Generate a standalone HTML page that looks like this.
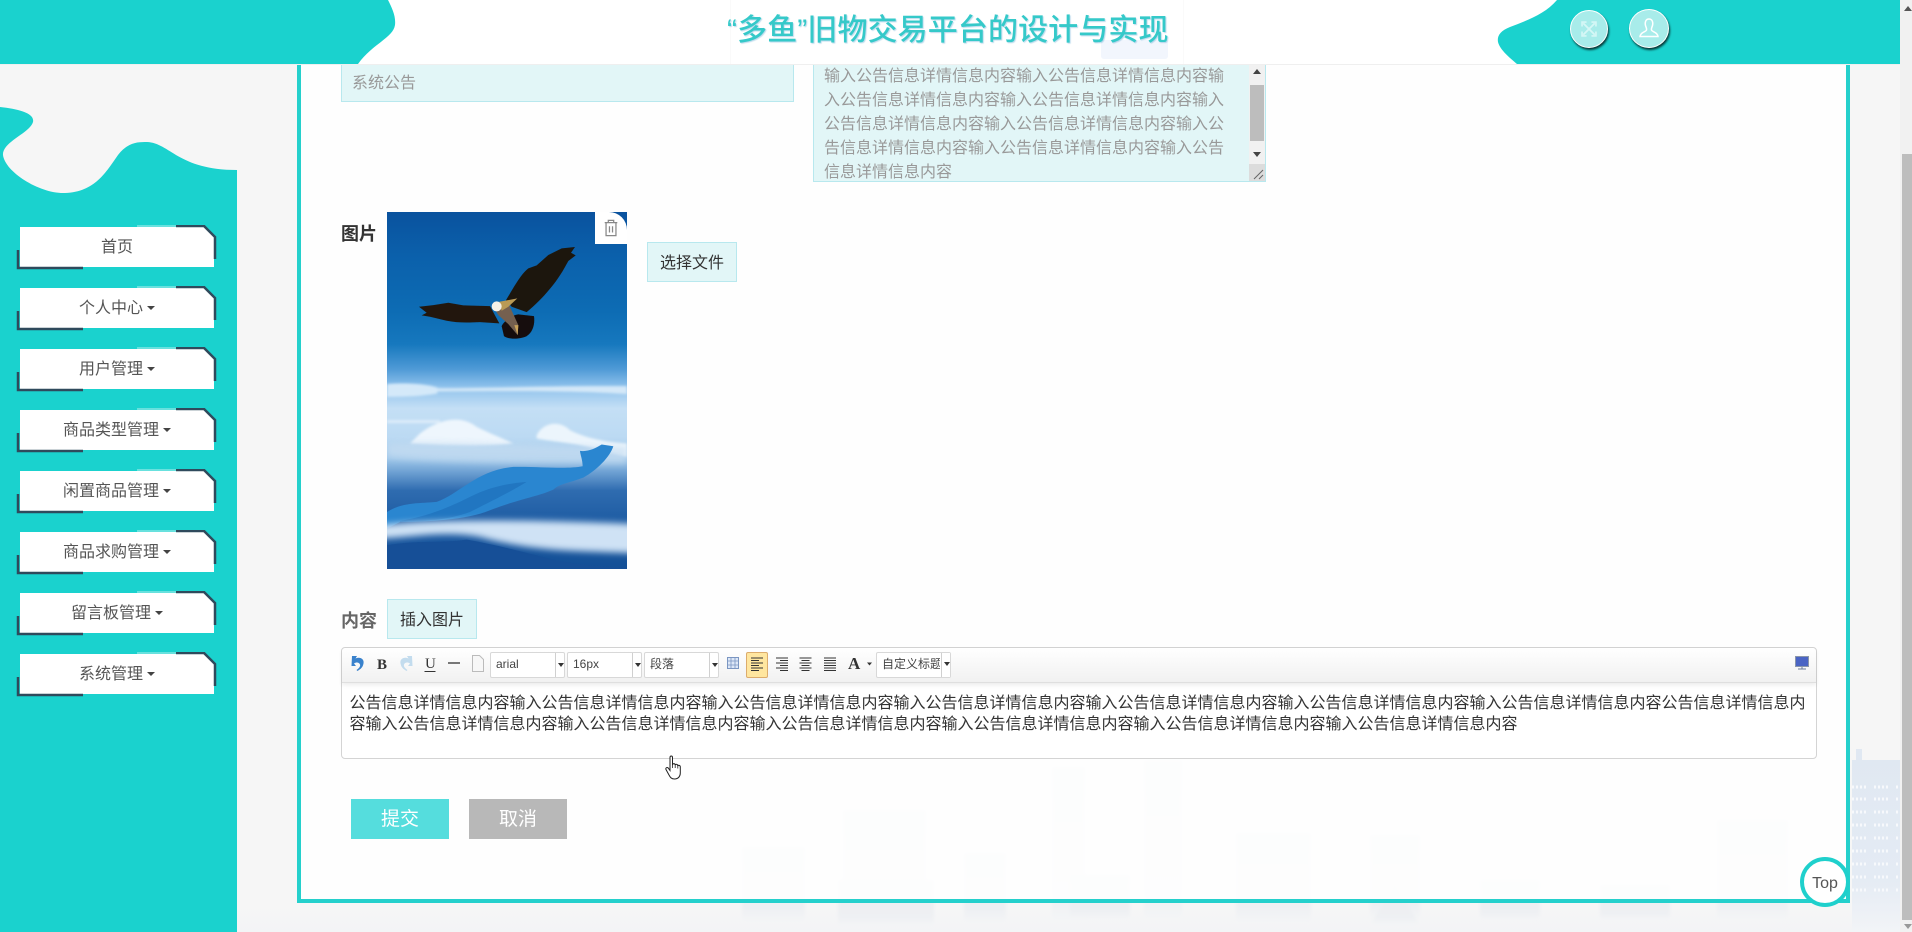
<!DOCTYPE html>
<html lang="zh-CN"><head><meta charset="utf-8"><title>多鱼</title>
<style>
*{box-sizing:border-box}
html,body{margin:0;padding:0;width:1912px;height:932px;overflow:hidden;background:#f6f6f6;font-family:"Liberation Sans","Noto Sans CJK SC",sans-serif;color:#333}
.a{position:absolute}
.nav{position:absolute;left:0;width:220px;height:46px}
.nav .b{position:absolute;left:20px;top:2px;width:194px;height:40px;background:#fff;clip-path:polygon(0 0,184px 0,194px 10px,194px 100%,0 100%);text-align:center;line-height:42px;font-size:16px;color:#555}
.nav svg{position:absolute;left:0;top:0}
.caret{display:inline-block;width:0;height:0;border-left:4px solid transparent;border-right:4px solid transparent;border-top:4px solid #444;margin-left:4px;vertical-align:middle;position:relative;top:-1px}
.inp{background:#e2f6f7;border:1px solid #b8e8ee}
.btn{position:absolute;width:90px;height:40px;background:#e2f6f7;border:1px solid #b8e8ee;font-size:16px;text-align:center;color:#333}
.sel{position:absolute;top:652px;height:26px;background:#fff;border:1px solid #d8d8d8;border-radius:2px;font-size:12px;line-height:23px;color:#444;padding-left:5px;overflow:hidden;white-space:nowrap}
.sel i{position:absolute;top:0;height:24px;width:1px;background:#d0d0d0}
.sel b{position:absolute;top:10px;width:0;height:0;border-left:3px solid transparent;border-right:3px solid transparent;border-top:4px solid #333}
</style></head><body>

<svg class="a" style="left:0;top:0" width="1912" height="932" viewBox="0 0 1912 932">
<defs>
<linearGradient id="bot" x1="0" y1="0" x2="0" y2="1"><stop offset="0" stop-color="#f6f6f6"/><stop offset="1" stop-color="#f3f4f6"/></linearGradient>
<linearGradient id="fade" x1="0" y1="0" x2="0" y2="1"><stop offset="0" stop-color="#ebedf0"/><stop offset=".8" stop-color="#eef0f3"/><stop offset="1" stop-color="#f4f5f6"/></linearGradient>
<linearGradient id="rb" x1="0" y1="0" x2="0" y2="1"><stop offset="0" stop-color="#e0e8f2"/><stop offset=".7" stop-color="#e4ebf4"/><stop offset="1" stop-color="#f2f4f7"/></linearGradient>
<filter id="sb"><feGaussianBlur stdDeviation="1.500"/></filter>
</defs>
<rect x="0" y="904" width="1912" height="28" fill="url(#bot)"/>
<g fill="url(#fade)" filter="url(#sb)">
<rect x="742" y="847" width="63" height="75"/><rect x="843" y="810" width="83" height="115"/><rect x="838" y="880" width="96" height="46"/>
<rect x="964" y="853" width="42" height="70"/><rect x="1052" y="767" width="33" height="155"/><rect x="1070" y="875" width="60" height="45"/><rect x="1144" y="760" width="38" height="160"/>
<rect x="1236" y="833" width="75" height="90"/><rect x="1370" y="835" width="50" height="85"/><path d="M1370 925l25-40 25 40z"/><rect x="1480" y="880" width="60" height="40"/>
<rect x="1600" y="885" width="70" height="35"/><rect x="1717" y="820" width="71" height="100"/>
</g>
<path fill="url(#rb)" d="M1852 760h4v-11h6v11h38v172h-48z"/>
<g stroke="#f7f9fc" stroke-width="3" stroke-dasharray="2 2 2 2 2 2 2 8" fill="none"><path d="M1852 787h48M1852 799h48M1852 812h48M1852 825h48M1852 838h48M1852 851h48M1852 864h48M1852 877h48M1852 890h48"/></g>
</svg>

<div class="a" style="left:297px;top:0;width:1553px;height:903px;border:4px solid #25d0cc;border-top:0;background:rgba(255,255,255,.85)"></div>

<!-- sidebar -->
<svg class="a" style="left:0;top:60px" width="240" height="872" viewBox="0 60 240 872"><path fill="#1ad2ce" d="M0 107C18 109 35 113 33 122C30 133 2 142 3 155C5 172 40 194 65 193C95 192 106 172 118 155C128 142 138 142 147 142C170 143 178 170 237 170V932H0Z"/></svg>
<div class="nav" style="top:225px"><div class="b">首页</div><svg width="220" height="46"><path d="M137 1H176" stroke="#b6f0ee" stroke-width="1"/><path d="M176 1H204L215 12V34" fill="none" stroke="#2f4a5c" stroke-width="2.5"/><path d="M18 25V43H83" fill="none" stroke="#2f4a5c" stroke-width="2.5"/></svg></div>
<div class="nav" style="top:286px"><div class="b">个人中心<span class="caret"></span></div><svg width="220" height="46"><path d="M137 1H176" stroke="#b6f0ee" stroke-width="1"/><path d="M176 1H204L215 12V34" fill="none" stroke="#2f4a5c" stroke-width="2.5"/><path d="M18 25V43H83" fill="none" stroke="#2f4a5c" stroke-width="2.5"/></svg></div>
<div class="nav" style="top:347px"><div class="b">用户管理<span class="caret"></span></div><svg width="220" height="46"><path d="M137 1H176" stroke="#b6f0ee" stroke-width="1"/><path d="M176 1H204L215 12V34" fill="none" stroke="#2f4a5c" stroke-width="2.5"/><path d="M18 25V43H83" fill="none" stroke="#2f4a5c" stroke-width="2.5"/></svg></div>
<div class="nav" style="top:408px"><div class="b">商品类型管理<span class="caret"></span></div><svg width="220" height="46"><path d="M137 1H176" stroke="#b6f0ee" stroke-width="1"/><path d="M176 1H204L215 12V34" fill="none" stroke="#2f4a5c" stroke-width="2.5"/><path d="M18 25V43H83" fill="none" stroke="#2f4a5c" stroke-width="2.5"/></svg></div>
<div class="nav" style="top:469px"><div class="b">闲置商品管理<span class="caret"></span></div><svg width="220" height="46"><path d="M137 1H176" stroke="#b6f0ee" stroke-width="1"/><path d="M176 1H204L215 12V34" fill="none" stroke="#2f4a5c" stroke-width="2.5"/><path d="M18 25V43H83" fill="none" stroke="#2f4a5c" stroke-width="2.5"/></svg></div>
<div class="nav" style="top:530px"><div class="b">商品求购管理<span class="caret"></span></div><svg width="220" height="46"><path d="M137 1H176" stroke="#b6f0ee" stroke-width="1"/><path d="M176 1H204L215 12V34" fill="none" stroke="#2f4a5c" stroke-width="2.5"/><path d="M18 25V43H83" fill="none" stroke="#2f4a5c" stroke-width="2.5"/></svg></div>
<div class="nav" style="top:591px"><div class="b">留言板管理<span class="caret"></span></div><svg width="220" height="46"><path d="M137 1H176" stroke="#b6f0ee" stroke-width="1"/><path d="M176 1H204L215 12V34" fill="none" stroke="#2f4a5c" stroke-width="2.5"/><path d="M18 25V43H83" fill="none" stroke="#2f4a5c" stroke-width="2.5"/></svg></div>
<div class="nav" style="top:652px"><div class="b">系统管理<span class="caret"></span></div><svg width="220" height="46"><path d="M137 1H176" stroke="#b6f0ee" stroke-width="1"/><path d="M176 1H204L215 12V34" fill="none" stroke="#2f4a5c" stroke-width="2.5"/><path d="M18 25V43H83" fill="none" stroke="#2f4a5c" stroke-width="2.5"/></svg></div>

<!-- form top -->
<div class="a inp" style="left:341px;top:40px;width:453px;height:62px"></div>
<div class="a" style="left:352px;top:72px;font-size:16px;line-height:24px;color:#999">系统公告</div>
<div class="a inp" style="left:813px;top:40px;width:453px;height:142px;overflow:hidden"></div>
<div class="a" style="left:824px;top:65px;font-size:16px;line-height:23.9px;color:#999;white-space:nowrap;height:116px;overflow:hidden">输入公告信息详情信息内容输入公告信息详情信息内容输<br>入公告信息详情信息内容输入公告信息详情信息内容输入<br>公告信息详情信息内容输入公告信息详情信息内容输入公<br>告信息详情信息内容输入公告信息详情信息内容输入公告<br>信息详情信息内容</div>
<div class="a" style="left:1249px;top:64px;width:16px;height:117px;background:#f1f1f1"></div>
<div class="a" style="left:1250px;top:85px;width:14px;height:56px;background:#bdbdbd"></div>
<div class="a" style="left:1253px;top:69px;width:0;height:0;border-left:4px solid transparent;border-right:4px solid transparent;border-bottom:5px solid #444"></div>
<div class="a" style="left:1253px;top:152px;width:0;height:0;border-left:4px solid transparent;border-right:4px solid transparent;border-top:5px solid #444"></div>
<svg class="a" style="left:1249px;top:164px" width="16" height="17"><rect width="16" height="17" fill="#dcdcdc"/><path d="M5 15L14 6M10 15L14 11" stroke="#666" stroke-width="1"/></svg>

<!-- picture -->
<div class="a" style="left:341px;top:221px;font-size:18px;line-height:26px;font-weight:bold;color:#333">图片</div>
<svg class="a" style="left:387px;top:212px" width="240" height="357" viewBox="21 36 720 1070" preserveAspectRatio="none">
<defs>
<linearGradient id="sky" x1="0" y1="0" x2="0" y2="1"><stop offset="0" stop-color="#0a529e"/><stop offset=".12" stop-color="#0b60ab"/><stop offset=".28" stop-color="#0d6cb4"/><stop offset=".37" stop-color="#1678be"/><stop offset=".44" stop-color="#4f9ad6"/><stop offset=".49" stop-color="#8fc2ec"/><stop offset=".55" stop-color="#c4dff5"/><stop offset=".63" stop-color="#bcdaf3"/><stop offset=".69" stop-color="#9fc7e9"/><stop offset=".73" stop-color="#6c9fd2"/><stop offset=".78" stop-color="#2f6cb0"/><stop offset=".86" stop-color="#1f5da4"/><stop offset="1" stop-color="#134f96"/></linearGradient>
<filter id="bl" x="-10%" y="-30%" width="120%" height="160%"><feGaussianBlur stdDeviation="10"/></filter><filter id="bl2" x="-10%" y="-30%" width="120%" height="160%"><feGaussianBlur stdDeviation="4"/></filter><filter id="bl1"><feGaussianBlur stdDeviation="1"/></filter>
</defs>
<rect x="21" y="36" width="720" height="1070" fill="url(#sky)"/>
<g filter="url(#bl2)"><path fill="#d4e9f9" d="M21 552C70 548 130 550 172 562V580C120 590 60 590 21 590Z"/><path fill="#d4e8f8" d="M170 564C300 566 500 556 741 558V582C600 572 400 572 170 574Z"/></g>
<g filter="url(#bl2)"><path fill="#eef6fd" d="M120 700C170 660 240 640 290 680C330 700 370 715 400 730C300 740 180 735 90 730Z"/><path fill="#ecf5fc" d="M470 705C490 665 540 660 570 690C620 715 680 725 741 730V770L660 750C600 730 520 725 470 715Z"/><path fill="#e0eefa" d="M21 660H180V668H21Z"/></g>
<path fill="#c8def2" filter="url(#bl)" opacity=".7" d="M21 730C200 720 500 740 741 740V790C500 790 200 790 21 770Z"/>
<path fill="#2b86d0" filter="url(#bl1)" d="M21 935C70 905 120 910 170 905C240 880 290 810 400 800C470 798 560 808 608 798C608 780 600 760 600 752C625 755 645 745 665 733L700 738C690 770 650 810 610 832C560 850 540 850 520 868C470 890 420 895 330 930C260 960 130 965 60 965L21 985Z"/>
<path fill="#1b6db8" d="M60 962C130 950 190 930 270 890C330 860 380 850 440 845C400 870 340 900 270 935C200 960 120 965 60 965Z" opacity=".6" filter="url(#bl1)"/>
<path fill="#cfe2f5" filter="url(#bl)" d="M0 975C150 958 400 955 780 972V1060C640 1050 480 1060 300 1010C200 990 100 1010 0 1015Z"/>
<path fill="#154f97" filter="url(#bl1)" d="M21 1035C100 1020 200 1028 260 1018C330 1030 420 1052 520 1078C600 1095 680 1100 741 1102V1106H21Z"/>
<g filter="url(#bl1)">
<path fill="#1d1510" d="M378 300C400 265 420 225 445 205L470 196L505 165L545 145L585 141L573 158L587 166L565 183L552 206C530 245 490 295 440 336L395 320Z"/>
<path fill="#20170f" d="M117 320L160 315L205 308L250 316L330 318L358 370L300 366C260 368 230 368 200 362L150 350L125 346L140 338Z"/>
<path fill="#140f0c" d="M365 378C370 365 395 345 415 343L462 348C465 370 460 395 440 408C420 418 385 418 372 408Z"/>
<path fill="#75604f" d="M340 320L385 310L415 375L413 405L385 372L355 345Z"/>
<path fill="#c9a35a" d="M403 375L415 375L413 405Z"/>
<path fill="#b99a55" d="M358 305L412 295L385 320L365 332Z"/>
<circle cx="350" cy="319" r="15" fill="#f4f1e8"/>
</g>
</svg>
<div class="a" style="left:595px;top:212px;width:32px;height:32px;background:#fff;border-top-right-radius:18px"></div>
<svg class="a" style="left:602px;top:218px" width="18" height="20" viewBox="0 0 20 22" fill="none" stroke="#888" stroke-width="1.400"><path d="M3 5H17M7 5V2.500H13V5M4.500 5V19.500H15.500V5M8.300 9V16M11.700 9V16"/></svg>
<div class="btn" style="left:647px;top:242px;line-height:41px">选择文件</div>

<!-- content -->
<div class="a" style="left:341px;top:608px;font-size:18px;line-height:26px;font-weight:bold;color:#666">内容</div>
<div class="btn" style="left:387px;top:599px;line-height:41px">插入图片</div>

<div class="a" style="left:341px;top:647px;width:1476px;height:112px;background:#fff;border:1px solid #d4d4d4;border-radius:4px"></div>
<div class="a" style="left:342px;top:648px;width:1474px;height:35px;background:linear-gradient(#fff,#f1f1f1);border-bottom:1px solid #dfdfdf;box-shadow:0 2px 4px rgba(0,0,0,.08);border-radius:4px 4px 0 0"></div>

<svg class="a" style="left:342px;top:648px" width="540" height="34" viewBox="342 648 540 34">
<path d="M352 656h5l-1.500 2.500c4-2 9 0 8 5s-4 6-6 7.500l-1-1c3-2 4-4 3.500-5.500s-3-3-6-1l2 2.500h-4.500z" fill="#3a82cc"/>
<text x="377" y="669" font-family="Liberation Serif" font-weight="bold" font-size="15" fill="#333">B</text>
<path d="M412 656h-5l1.500 2.500c-4-2-9 0-8 5s4 6 6 7.500l1-1c-3-2-4-4-3.500-5.500s3-3 6-1l-2 2.500h4.500z" fill="#c3dcee"/>
<text x="425" y="668" font-family="Liberation Serif" font-size="15" fill="#333">U</text><path d="M424.500 671.500h11" stroke="#333"/>
<path d="M448 663h12" stroke="#333" stroke-width="1.300"/>
<path d="M472.500 655.500h7l4 4v12h-11z" fill="#f7f7f7" stroke="#bbb"/>
<rect x="727.500" y="657.500" width="11" height="11" fill="#dce7f7" stroke="#7b96c2"/><path d="M727 661h12M727 665h12M731 658v10M735 658v10" stroke="#7b96c2" stroke-width=".8"/>
<rect x="746.500" y="652.500" width="21" height="25" rx="1.500" fill="#ffe69f" stroke="#dcac6c"/>
<g stroke="#333" stroke-width="1"><path d="M751 658h12M751 660.500h8M751 663h12M751 665.500h8M751 668h12M751 670.500h8"/>
<path d="M776 658h12M780 660.500h8M776 663h12M780 665.500h8M776 668h12M780 670.500h8"/>
<path d="M799.500 658h12M801.500 660.500h8M799.500 663h12M801.500 665.500h8M799.500 668h12M801.500 670.500h8"/>
<path d="M824 658h12M824 660.500h12M824 663h12M824 665.500h12M824 668h12M824 670.500h12"/></g>
<text x="848" y="669" font-family="Liberation Serif" font-weight="bold" font-size="17" fill="#333">A</text>
<path d="M867 662.500h5l-2.500 3z" fill="#333"/>
</svg>

<div class="sel" style="left:490px;width:75px">arial<i style="left:64px"></i><b style="left:67px"></b></div>
<div class="sel" style="left:567px;width:75px">16px<i style="left:64px"></i><b style="left:67px"></b></div>
<div class="sel" style="left:644px;width:75px">段落<i style="left:64px"></i><b style="left:67px"></b></div>
<div class="sel" style="left:876px;width:75px">自定义标题<i style="left:64px"></i><b style="left:67px"></b></div>
<div class="a" style="left:940px;top:653px;width:10px;height:24px;background:#fff"></div>
<div class="a" style="left:941px;top:653px;width:1px;height:24px;background:#d0d0d0"></div>
<div class="a" style="left:944px;top:662px;width:0;height:0;border-left:3px solid transparent;border-right:3px solid transparent;border-top:4px solid #333"></div>

<svg class="a" style="left:1795px;top:656px" width="14" height="14"><rect x=".5" y=".5" width="13" height="10" fill="#4a64c4" stroke="#8a96aa"/><path d="M3 13h8M7 11v2" stroke="#6c7c99"/></svg>

<div class="a" style="left:349.500px;top:693px;width:1460px;font-size:16px;line-height:21px;color:#333;white-space:nowrap">公告信息详情信息内容输入公告信息详情信息内容输入公告信息详情信息内容输入公告信息详情信息内容输入公告信息详情信息内容输入公告信息详情信息内容输入公告信息详情信息内容公告信息详情信息内<br>容输入公告信息详情信息内容输入公告信息详情信息内容输入公告信息详情信息内容输入公告信息详情信息内容输入公告信息详情信息内容输入公告信息详情信息内容</div>

<div class="a" style="left:351px;top:799px;width:98px;height:40px;background:#55dddd;color:#fff;font-size:19px;line-height:42px;text-align:center">提交</div>
<div class="a" style="left:469px;top:799px;width:98px;height:40px;background:#b8b8b8;color:#fff;font-size:19px;line-height:42px;text-align:center">取消</div>

<svg class="a" style="left:665px;top:755px" width="18" height="25" viewBox="0 0 18 25"><path d="M5 2.500C5 .5 7.500 .5 7.500 2.500V10C8 8 10.200 8.300 10.200 10.300C10.500 8.800 12.800 9 12.800 11C13.200 9.800 15.300 10.300 15.300 12V18C15.300 21 13.500 24 9.500 24C6.500 24 5.300 22.500 4 20L1 14.500C.3 13 2 11.800 3.200 13L5 15.500Z" fill="#fff" stroke="#222" stroke-width="1"/><path d="M7.500 10V13M10.200 10.300V13M12.800 11V13.500" stroke="#222" stroke-width=".8"/></svg>

<div class="a" style="left:1800px;top:857px;width:50px;height:50px;border:4px solid #1fd0cc;border-radius:50%;background:#fff;text-align:center;line-height:46px;font-size:16px;color:#555">Top</div>

<!-- header -->
<div class="a" style="left:0;top:0;width:1900px;height:65px;background:#fff;border-bottom:1px solid #efefef"></div>
<div class="a" style="left:1101px;top:40px;width:67px;height:19px;background:#f2f6fd;border-radius:3px"></div>
<div class="a" style="left:730px;top:0;width:1px;height:64px;background:#fafafa"></div>
<div class="a" style="left:1183px;top:0;width:1px;height:64px;background:#fafafa"></div>
<svg class="a" style="left:0;top:0" width="1900" height="64" viewBox="0 0 1900 64">
<path fill="#1ad2ce" d="M0 0H388C392 8 396 16 395 25C393 38 372 44 358 64H0Z"/>
<path fill="#1ad2ce" d="M1557 0C1545 14 1528 20 1510 27C1500 31 1497 36 1498 42C1500 50 1510 58 1517 64H1900V0Z"/>
</svg>
<div class="a" style="left:727px;top:12px;width:450px;font-size:30px;line-height:38px;font-weight:500;color:#35c9c9;text-shadow:1px 1px 1px rgba(60,150,200,.35);white-space:nowrap;letter-spacing:.1px">“多鱼”旧物交易平台的设计与实现</div>

<div class="a" style="left:1570px;top:10px;width:38px;height:38px;border-radius:50%;background:#a8ecea;border:1.500px solid #fff;box-shadow:1px 2px 2px rgba(0,0,0,.75)"></div>
<svg class="a" style="left:1580px;top:20px" width="18" height="18" viewBox="0 0 22 22" fill="none" stroke="#d6f7f6" stroke-width="2.200"><path d="M4 4L18 18M18 4L4 18"/><path d="M2.500 8V2.500H8M14 2.500H19.500V8M19.500 14V19.500H14M8 19.500H2.500V14" stroke-width="2"/></svg>
<div class="a" style="left:1629px;top:9px;width:40px;height:39px;border-radius:50%;background:#a8ecea;border:1.500px solid #fff;box-shadow:1px 2px 2px rgba(0,0,0,.75)"></div>
<svg class="a" style="left:1638px;top:17px" width="22" height="22" viewBox="0 0 22 22" fill="none" stroke="#fff" stroke-width="1.500"><path d="M11 2C7.800 2 7 5 7.300 7.500C7.600 10 9 11 8.500 13C8 15 2.500 15 2 19.500H20C19.500 15 14 15 13.500 13C13 11 14.400 10 14.700 7.500C15 5 14.200 2 11 2Z"/></svg>

<!-- page scrollbar -->
<div class="a" style="left:1900px;top:0;width:12px;height:932px;background:#f1f1f1"></div>
<div class="a" style="left:1902px;top:154px;width:10px;height:766px;background:#bdbdbd"></div>
<div class="a" style="left:1904px;top:6px;width:0;height:0;border-left:4px solid transparent;border-right:4px solid transparent;border-bottom:5px solid #555"></div>
<div class="a" style="left:1904px;top:924px;width:0;height:0;border-left:4px solid transparent;border-right:4px solid transparent;border-top:5px solid #999"></div>
</body></html>
